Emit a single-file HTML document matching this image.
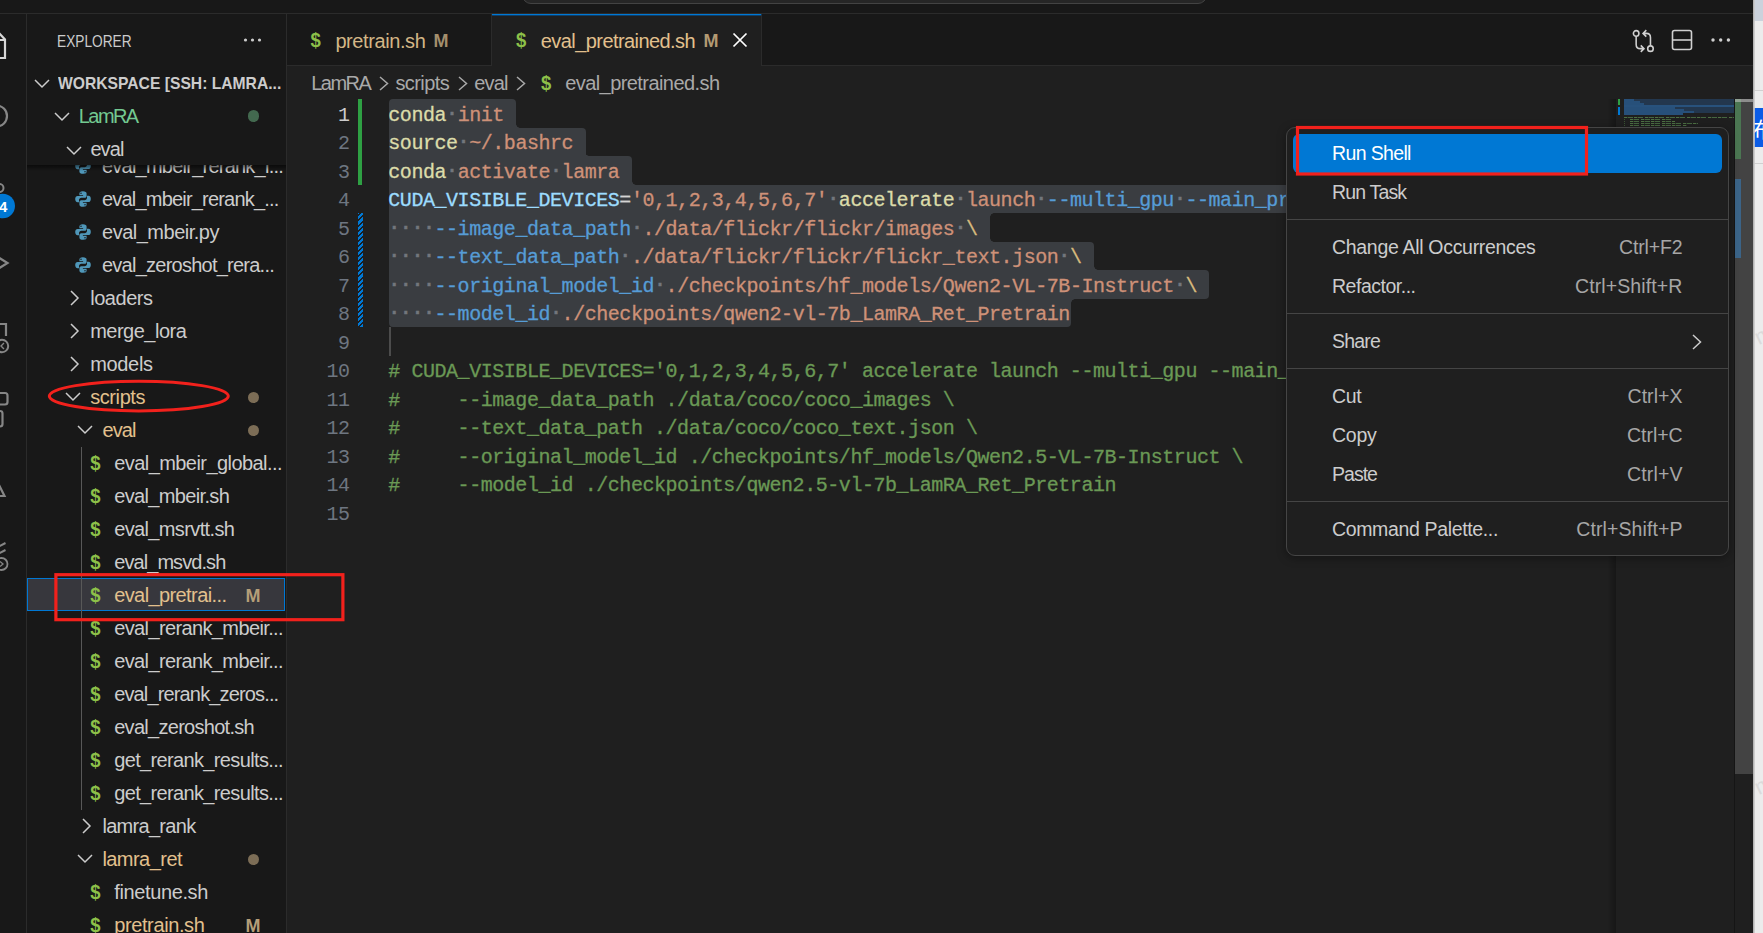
<!DOCTYPE html>
<html lang="en">
<head>
<meta charset="utf-8">
<title>eval_pretrained.sh - WORKSPACE [SSH: LamRA] - Visual Studio Code</title>
<style>
*{box-sizing:border-box;margin:0;padding:0}
html,body{width:1763px;height:933px;overflow:hidden;background:#181818}
body{position:relative;font-family:"Liberation Sans",sans-serif;color:#cccccc;font-size:19px}
.abs{position:absolute}
span{white-space:pre}
/* title bar */
#title{position:absolute;left:0;top:0;width:1753px;height:14px;background:#181818;border-bottom:1px solid #2b2b2b;overflow:hidden}
#cc{position:absolute;left:521.5px;top:-20px;width:685.5px;height:24px;border:1px solid #434343;border-radius:9px;background:#262626}
/* activity bar */
#act{position:absolute;left:0;top:14px;width:27px;height:919px;background:#181818;border-right:1px solid #2b2b2b;overflow:hidden}
/* sidebar */
#side{position:absolute;left:27px;top:14px;width:260px;height:919px;background:#181818;border-right:1px solid #2b2b2b;overflow:hidden}
/* editor group */
#tabs{position:absolute;left:287px;top:14px;width:1466px;height:52px;background:#181818;border-bottom:1px solid #2b2b2b}
.tab{position:absolute;top:0;height:52px;border-right:1px solid #2b2b2b}
#crumbs{position:absolute;left:287px;top:66px;width:1466px;height:33px;background:#1f1f1f;color:#a9a9a9}
#ed{position:absolute;left:287px;top:99px;width:1466px;height:834px;background:#1f1f1f;overflow:hidden}
/* right strip (other window) */
#strip{position:absolute;left:1753px;top:0;width:10px;height:933px;background:#ececec;overflow:hidden}
.sh{font-weight:700;color:#8dc149;font-size:18.5px;display:inline-block;transform:scaleY(1.07)}
.cv{fill:none;stroke:#a9a9a9;stroke-width:1.5}
.sel{position:absolute;left:102px;height:28.5px;background:#3a3d41}
.ln{position:absolute;left:0;margin-top:2.6px;width:62.5px;text-align:right;height:28.5px;line-height:28.5px;font-family:"Liberation Mono",monospace;font-size:20px;letter-spacing:-0.45px}
.cl{position:absolute;left:101.3px;margin-top:2.6px;height:28.5px;line-height:28.5px;white-space:pre;font-family:"Liberation Mono",monospace;font-size:20px;letter-spacing:-0.45px;color:#d4d4d4;-webkit-text-stroke:0.3px}
.mg{height:1px;background:repeating-linear-gradient(90deg,#4d7043 0 3px,rgba(68,99,59,.4) 3px 4px,#456640 4px 9px,transparent 9px 10.5px)}
.ws{color:#72767c;font-weight:700;position:relative;top:-1.8px}
#menu{position:absolute;left:1286px;top:127px;width:443px;height:429px;background:#1f1f1f;border:1px solid #454545;border-radius:9px;padding:6px 0;box-shadow:0 2px 10px rgba(0,0,0,.36)}
.mi{position:relative;height:39px;margin:0 6px;border-radius:6px;line-height:39px}
.mi.hl{background:#0078d4}
.ml{position:absolute;left:39px;top:0;color:#cccccc}
.mk{position:absolute;right:39.5px;top:0;color:#a6a6a6}
.msep{height:1px;background:#454545;margin:6.5px 0 8.5px}
</style>
</head>
<body>
<div id="title"><div id="cc"></div></div>
<div id="act"><!-- activity bar is cropped on the left: only the right edge of each icon shows (coords relative to y=14) -->
<svg class="abs" style="left:0;top:0" width="26" height="919" viewBox="0 14 26 919" fill="none">
  <!-- explorer (active) -->
  <path d="M-7 33.5 H-0.5 L5 39.5 V58 H-7" stroke="#d7d7d7" stroke-width="2.2"/>
  <path d="M-7 40 H5" stroke="#d7d7d7" stroke-width="2"/>
  <!-- search -->
  <circle cx="-3.5" cy="116" r="10.5" stroke="#868686" stroke-width="2.2"/>
  <!-- source control -->
  <circle cx="-0.5" cy="188" r="4" stroke="#868686" stroke-width="2"/>
  <circle cx="2.8" cy="206" r="12.2" fill="#0078d4"/>
  <!-- run -->
  <path d="M-8 253.5 L7.5 263 L-8 272.5" stroke="#868686" stroke-width="2.2"/>
  <!-- remote explorer -->
  <path d="M-6 324 H6 V336" stroke="#868686" stroke-width="2.2"/>
  <circle cx="2" cy="346" r="6.2" stroke="#868686" stroke-width="2" fill="#181818"/>
  <path d="M4 343 L1 346 L4 349" stroke="#868686" stroke-width="1.4"/>
  <!-- extensions -->
  <path d="M-6 393 H5 Q7.5 393 7.5 395.5 V402 Q7.5 404.5 5 404.5 H-6" stroke="#868686" stroke-width="2.2"/>
  <path d="M-6 411 H0 Q2.5 411 2.5 413.5 V424 Q2.5 426.5 0 426.5 H-6" stroke="#868686" stroke-width="2.2"/>
  <!-- testing -->
  <path d="M-4 479 L4.5 496 H-6" stroke="#868686" stroke-width="2.2"/>
  <!-- other -->
  <path d="M-6 549 L5.5 543 M-6 556 L5.5 550" stroke="#868686" stroke-width="2"/>
  <circle cx="1.5" cy="564" r="6" stroke="#868686" stroke-width="1.8" fill="#181818"/>
  <path d="M0 561.5 L3 564 L0 566.5" stroke="#868686" stroke-width="1.3"/>
</svg>
<span class="abs" style="left:-1px;top:181px;line-height:24px;font-size:15px;font-weight:700;color:#ffffff">4</span>
</div>
<div id="side"><div id="tree"><svg class="abs" style="left:48.3px;top:144px" width="16" height="16" viewBox="0 0 16 16" fill="#4f97b9"><path d="M7.9 0.3C5.2 0.3 4.4 1.3 4.4 2.6V4.3H8.1V5H2.6C1.2 5 0.2 6.1 0.2 8.1C0.2 10.1 1.1 11.3 2.5 11.3H4V9.2C4 7.8 5.1 6.8 6.4 6.8H9.7C10.8 6.8 11.6 6 11.6 4.9V2.6C11.6 1.2 10.4 0.3 7.9 0.3ZM6 1.5A0.75 0.75 0 1 1 6 3A0.75 0.75 0 1 1 6 1.5Z"/><path d="M8.1 15.7C10.8 15.7 11.6 14.7 11.6 13.4V11.7H7.9V11H13.4C14.8 11 15.8 9.9 15.8 7.9C15.8 5.9 14.9 4.7 13.5 4.7H12V6.8C12 8.2 10.9 9.2 9.6 9.2H6.3C5.2 9.2 4.4 10 4.4 11.1V13.4C4.4 14.8 5.6 15.7 8.1 15.7ZM10 14.5A0.75 0.75 0 1 1 10 13A0.75 0.75 0 1 1 10 14.5Z"/></svg><span class="abs" style="left:75.0px;top:136.4px;line-height:33px;color:#cccccc"><span style="font-size:20.0px;letter-spacing:-0.767px">eval_mbeir_rerank_l...</span></span>
<svg class="abs" style="left:48.3px;top:177px" width="16" height="16" viewBox="0 0 16 16" fill="#4f97b9"><path d="M7.9 0.3C5.2 0.3 4.4 1.3 4.4 2.6V4.3H8.1V5H2.6C1.2 5 0.2 6.1 0.2 8.1C0.2 10.1 1.1 11.3 2.5 11.3H4V9.2C4 7.8 5.1 6.8 6.4 6.8H9.7C10.8 6.8 11.6 6 11.6 4.9V2.6C11.6 1.2 10.4 0.3 7.9 0.3ZM6 1.5A0.75 0.75 0 1 1 6 3A0.75 0.75 0 1 1 6 1.5Z"/><path d="M8.1 15.7C10.8 15.7 11.6 14.7 11.6 13.4V11.7H7.9V11H13.4C14.8 11 15.8 9.9 15.8 7.9C15.8 5.9 14.9 4.7 13.5 4.7H12V6.8C12 8.2 10.9 9.2 9.6 9.2H6.3C5.2 9.2 4.4 10 4.4 11.1V13.4C4.4 14.8 5.6 15.7 8.1 15.7ZM10 14.5A0.75 0.75 0 1 1 10 13A0.75 0.75 0 1 1 10 14.5Z"/></svg><span class="abs" style="left:75.0px;top:169.4px;line-height:33px;color:#cccccc"><span style="font-size:20.0px;letter-spacing:-0.807px">eval_mbeir_rerank_...</span></span>
<svg class="abs" style="left:48.3px;top:210px" width="16" height="16" viewBox="0 0 16 16" fill="#4f97b9"><path d="M7.9 0.3C5.2 0.3 4.4 1.3 4.4 2.6V4.3H8.1V5H2.6C1.2 5 0.2 6.1 0.2 8.1C0.2 10.1 1.1 11.3 2.5 11.3H4V9.2C4 7.8 5.1 6.8 6.4 6.8H9.7C10.8 6.8 11.6 6 11.6 4.9V2.6C11.6 1.2 10.4 0.3 7.9 0.3ZM6 1.5A0.75 0.75 0 1 1 6 3A0.75 0.75 0 1 1 6 1.5Z"/><path d="M8.1 15.7C10.8 15.7 11.6 14.7 11.6 13.4V11.7H7.9V11H13.4C14.8 11 15.8 9.9 15.8 7.9C15.8 5.9 14.9 4.7 13.5 4.7H12V6.8C12 8.2 10.9 9.2 9.6 9.2H6.3C5.2 9.2 4.4 10 4.4 11.1V13.4C4.4 14.8 5.6 15.7 8.1 15.7ZM10 14.5A0.75 0.75 0 1 1 10 13A0.75 0.75 0 1 1 10 14.5Z"/></svg><span class="abs" style="left:75.0px;top:202.4px;line-height:33px;color:#cccccc"><span style="font-size:20.0px;letter-spacing:-0.493px">eval_mbeir.py</span></span>
<svg class="abs" style="left:48.3px;top:243px" width="16" height="16" viewBox="0 0 16 16" fill="#4f97b9"><path d="M7.9 0.3C5.2 0.3 4.4 1.3 4.4 2.6V4.3H8.1V5H2.6C1.2 5 0.2 6.1 0.2 8.1C0.2 10.1 1.1 11.3 2.5 11.3H4V9.2C4 7.8 5.1 6.8 6.4 6.8H9.7C10.8 6.8 11.6 6 11.6 4.9V2.6C11.6 1.2 10.4 0.3 7.9 0.3ZM6 1.5A0.75 0.75 0 1 1 6 3A0.75 0.75 0 1 1 6 1.5Z"/><path d="M8.1 15.7C10.8 15.7 11.6 14.7 11.6 13.4V11.7H7.9V11H13.4C14.8 11 15.8 9.9 15.8 7.9C15.8 5.9 14.9 4.7 13.5 4.7H12V6.8C12 8.2 10.9 9.2 9.6 9.2H6.3C5.2 9.2 4.4 10 4.4 11.1V13.4C4.4 14.8 5.6 15.7 8.1 15.7ZM10 14.5A0.75 0.75 0 1 1 10 13A0.75 0.75 0 1 1 10 14.5Z"/></svg><span class="abs" style="left:75.0px;top:235.4px;line-height:33px;color:#cccccc"><span style="font-size:20.0px;letter-spacing:-0.757px">eval_zeroshot_rera...</span></span>
<svg class="abs" style="left:43.3px;top:276px;fill:none;stroke:#cccccc;stroke-width:1.5" width="10" height="16" viewBox="0 0 10 16"><path d="M1 1 L8 8 L1 15"/></svg><span class="abs" style="left:63.2px;top:268.4px;line-height:33px;color:#cccccc"><span style="font-size:20.0px;letter-spacing:-0.458px">loaders</span></span>
<svg class="abs" style="left:43.3px;top:309px;fill:none;stroke:#cccccc;stroke-width:1.5" width="10" height="16" viewBox="0 0 10 16"><path d="M1 1 L8 8 L1 15"/></svg><span class="abs" style="left:63.2px;top:301.4px;line-height:33px;color:#cccccc"><span style="font-size:20.0px;letter-spacing:-0.507px">merge_lora</span></span>
<svg class="abs" style="left:43.3px;top:342px;fill:none;stroke:#cccccc;stroke-width:1.5" width="10" height="16" viewBox="0 0 10 16"><path d="M1 1 L8 8 L1 15"/></svg><span class="abs" style="left:63.2px;top:334.4px;line-height:33px;color:#cccccc"><span style="font-size:20.0px;letter-spacing:-0.331px">models</span></span>
<svg class="abs" style="left:38.3px;top:378.2px;fill:none;stroke:#cccccc;stroke-width:1.5" width="16" height="10" viewBox="0 0 16 10"><path d="M1 1 L8 8 L15 1"/></svg><span class="abs" style="left:63.2px;top:367.4px;line-height:33px;color:#e2c08d"><span style="font-size:20.0px;letter-spacing:-0.414px">scripts</span></span><div class="abs" style="left:220.5px;top:377.5px;width:11.5px;height:11.5px;border-radius:50%;background:#7c6d56"></div>
<svg class="abs" style="left:50.3px;top:411.2px;fill:none;stroke:#cccccc;stroke-width:1.5" width="16" height="10" viewBox="0 0 16 10"><path d="M1 1 L8 8 L15 1"/></svg><span class="abs" style="left:75.6px;top:400.4px;line-height:33px;color:#e2c08d"><span style="font-size:20.0px;letter-spacing:-0.951px">eval</span></span><div class="abs" style="left:220.5px;top:410.5px;width:11.5px;height:11.5px;border-radius:50%;background:#7c6d56"></div>
<div class="abs" style="left:0;top:563.6px;width:258px;height:33.4px;background:#37373d;border:1px solid #0078d4"></div>
<div class="abs" style="left:54px;top:432.5px;width:1px;height:363px;background:#585858"></div>
<span class="abs sh" style="left:63.3px;top:433px;line-height:33px">$</span><span class="abs" style="left:87.2px;top:433.4px;line-height:33px;color:#cccccc"><span style="font-size:20.0px;letter-spacing:-0.560px">eval_mbeir_global...</span></span>
<span class="abs sh" style="left:63.3px;top:466px;line-height:33px">$</span><span class="abs" style="left:87.2px;top:466.4px;line-height:33px;color:#cccccc"><span style="font-size:20.0px;letter-spacing:-0.647px">eval_mbeir.sh</span></span>
<span class="abs sh" style="left:63.3px;top:499px;line-height:33px">$</span><span class="abs" style="left:87.2px;top:499.4px;line-height:33px;color:#cccccc"><span style="font-size:20.0px;letter-spacing:-0.631px">eval_msrvtt.sh</span></span>
<span class="abs sh" style="left:63.3px;top:532px;line-height:33px">$</span><span class="abs" style="left:87.2px;top:532.4px;line-height:33px;color:#cccccc"><span style="font-size:20.0px;letter-spacing:-0.923px">eval_msvd.sh</span></span>
<span class="abs sh" style="left:63.3px;top:565px;line-height:33px">$</span><span class="abs" style="left:87.2px;top:565.4px;line-height:33px;color:#e2c08d"><span style="font-size:20.0px;letter-spacing:-0.598px">eval_pretrai...</span></span>
<span class="abs sh" style="left:63.3px;top:598px;line-height:33px">$</span><span class="abs" style="left:87.2px;top:598.4px;line-height:33px;color:#cccccc"><span style="font-size:20.0px;letter-spacing:-0.620px">eval_rerank_mbeir...</span></span>
<span class="abs sh" style="left:63.3px;top:631px;line-height:33px">$</span><span class="abs" style="left:87.2px;top:631.4px;line-height:33px;color:#cccccc"><span style="font-size:20.0px;letter-spacing:-0.620px">eval_rerank_mbeir...</span></span>
<span class="abs sh" style="left:63.3px;top:664px;line-height:33px">$</span><span class="abs" style="left:87.2px;top:664.4px;line-height:33px;color:#cccccc"><span style="font-size:20.0px;letter-spacing:-0.855px">eval_rerank_zeros...</span></span>
<span class="abs sh" style="left:63.3px;top:697px;line-height:33px">$</span><span class="abs" style="left:87.2px;top:697.4px;line-height:33px;color:#cccccc"><span style="font-size:20.0px;letter-spacing:-0.713px">eval_zeroshot.sh</span></span>
<span class="abs sh" style="left:63.3px;top:730px;line-height:33px">$</span><span class="abs" style="left:87.2px;top:730.4px;line-height:33px;color:#cccccc"><span style="font-size:20.0px;letter-spacing:-0.644px">get_rerank_results...</span></span>
<span class="abs sh" style="left:63.3px;top:763px;line-height:33px">$</span><span class="abs" style="left:87.2px;top:763.4px;line-height:33px;color:#cccccc"><span style="font-size:20.0px;letter-spacing:-0.644px">get_rerank_results...</span></span>
<span class="abs" style="left:218.6px;top:564.5px;line-height:33px;color:#b59e78;font-weight:700"><span style="font-size:18.0px;letter-spacing:0.400px;font-weight:700">M</span></span>
<svg class="abs" style="left:55px;top:804px;fill:none;stroke:#cccccc;stroke-width:1.5" width="10" height="16" viewBox="0 0 10 16"><path d="M1 1 L8 8 L1 15"/></svg><span class="abs" style="left:75.4px;top:796.4px;line-height:33px;color:#cccccc"><span style="font-size:20.0px;letter-spacing:-0.695px">lamra_rank</span></span>
<svg class="abs" style="left:50.3px;top:840.2px;fill:none;stroke:#cccccc;stroke-width:1.5" width="16" height="10" viewBox="0 0 16 10"><path d="M1 1 L8 8 L15 1"/></svg><span class="abs" style="left:75.4px;top:829.4px;line-height:33px;color:#e2c08d"><span style="font-size:20.0px;letter-spacing:-0.543px">lamra_ret</span></span><div class="abs" style="left:220.5px;top:839.5px;width:11.5px;height:11.5px;border-radius:50%;background:#7c6d56"></div>
<span class="abs sh" style="left:63.3px;top:862px;line-height:33px">$</span><span class="abs" style="left:87.2px;top:862.4px;line-height:33px;color:#cccccc"><span style="font-size:20.0px;letter-spacing:-0.369px">finetune.sh</span></span>
<span class="abs sh" style="left:63.3px;top:895px;line-height:33px">$</span><span class="abs" style="left:87.2px;top:895.4px;line-height:33px;color:#e2c08d"><span style="font-size:20.0px;letter-spacing:-0.382px">pretrain.sh</span></span><span class="abs" style="left:218.6px;top:894.5px;line-height:33px;color:#b59e78;font-weight:700"><span style="font-size:18.0px;letter-spacing:0.400px;font-weight:700">M</span></span></div>
<div class="abs" style="left:0;top:0;width:259px;height:151px;background:#181818"></div>
<div class="abs" style="left:0;top:151px;width:259px;height:6px;background:linear-gradient(180deg,rgba(0,0,0,.55),rgba(0,0,0,0))"></div>
<span class="abs" style="left:30.4px;top:13.200000000000003px;line-height:28px;color:#cccccc"><span style="font-size:16.5px;display:inline-block;transform:scaleX(0.8300);transform-origin:0 50%">EXPLORER</span></span>
<svg class="abs" style="left:216px;top:23px" width="20" height="6" viewBox="0 0 20 6" fill="#cccccc"><circle cx="2.5" cy="3" r="1.6"/><circle cx="9.5" cy="3" r="1.6"/><circle cx="16.5" cy="3" r="1.6"/></svg>
<svg class="abs" style="left:6.5px;top:65.0px;fill:none;stroke:#cccccc;stroke-width:1.5" width="16" height="10" viewBox="0 0 16 10"><path d="M1 1 L8 8 L15 1"/></svg>
<span class="abs" style="left:30.5px;top:55px;line-height:28px;color:#cccccc;font-weight:700"><span style="font-size:16.2px;display:inline-block;transform:scaleX(0.9674);transform-origin:0 50%;font-weight:700">WORKSPACE [SSH: LAMRA...</span></span>
<svg class="abs" style="left:27px;top:98.0px;fill:none;stroke:#cccccc;stroke-width:1.5" width="16" height="10" viewBox="0 0 16 10"><path d="M1 1 L8 8 L15 1"/></svg><span class="abs" style="left:51.8px;top:85.9px;line-height:33px;color:#73c991"><span style="font-size:20.0px;letter-spacing:-1.581px">LamRA</span></span><div class="abs" style="left:220.5px;top:96.0px;width:11.5px;height:11.5px;border-radius:50%;background:#43694f"></div>
<svg class="abs" style="left:38.7px;top:131.5px;fill:none;stroke:#cccccc;stroke-width:1.5" width="16" height="10" viewBox="0 0 16 10"><path d="M1 1 L8 8 L15 1"/></svg><span class="abs" style="left:63.400000000000006px;top:118.9px;line-height:33px;color:#cccccc"><span style="font-size:20.0px;letter-spacing:-0.901px">eval</span></span></div>
<div id="tabs"><div class="tab" style="left:0;width:205px;height:51px;background:#181818">
  <span class="abs sh" style="left:23.6px;top:1.4px;line-height:51px">$</span>
  <span class="abs" style="left:48.4px;top:1px;line-height:52px;color:#d3b686"><span style="font-size:20.0px;letter-spacing:-0.409px">pretrain.sh</span></span>
  <span class="abs" style="left:146.4px;top:1px;line-height:52px;color:#a48f6d"><span style="font-size:18.0px;letter-spacing:0.300px;font-weight:700">M</span></span>
</div>
<div class="tab" style="left:205px;width:270px;height:53px;background:#1f1f1f;border-top:2px solid #0d3e68">
  <div class="abs" style="left:0;top:-2px;width:269px;height:1px;background:#0078d4"></div>
  <span class="abs sh" style="left:24.1px;top:-1px;line-height:51px">$</span>
  <span class="abs" style="left:48.8px;top:-1px;line-height:52px;color:#e2c08d"><span style="font-size:20.0px;letter-spacing:-0.570px">eval_pretrained.sh</span></span>
  <span class="abs" style="left:211.6px;top:-1px;line-height:52px;color:#b39a73"><span style="font-size:18.0px;letter-spacing:0.000px;font-weight:700">M</span></span>
  <svg class="abs" style="left:240px;top:16px" width="16" height="16" viewBox="0 0 16 16"><path d="M1.5 1.5 L14.5 14.5 M14.5 1.5 L1.5 14.5" stroke="#ffffff" stroke-width="1.7" fill="none"/></svg>
</div>
<!-- editor actions -->
<svg class="abs" style="left:1344.5px;top:14.5px" width="24" height="24.5" viewBox="0 0 26 26" fill="none" stroke="#d0d0d0" stroke-width="1.7">
  <circle cx="4.5" cy="4.5" r="3"/><circle cx="20" cy="21" r="3"/>
  <path d="M4.5 7.5 V16.5 Q4.5 21 9 21 H12.5 M9.5 17.5 L13 21 L9.5 24.5"/>
  <path d="M20 18 V9 Q20 4.5 15.5 4.5 H12.5 M15.5 1 L12 4.5 L15.5 8"/>
</svg>
<svg class="abs" style="left:1384px;top:15px" width="22" height="22" viewBox="0 0 22 22" fill="none" stroke="#d0d0d0" stroke-width="1.6">
  <rect x="1.5" y="1.5" width="19" height="19" rx="2"/><path d="M1.5 11 H20.5"/>
</svg>
<svg class="abs" style="left:1423px;top:23px" width="22" height="6" viewBox="0 0 22 6" fill="#d0d0d0"><circle cx="3" cy="3" r="1.7"/><circle cx="10.7" cy="3" r="1.7"/><circle cx="18.4" cy="3" r="1.7"/></svg>
</div>
<div id="crumbs"><span class="abs" style="left:24.2px;top:0;line-height:34px"><span style="font-size:20.0px;letter-spacing:-1.521px">LamRA</span></span>
<svg class="abs cv" style="left:91px;top:10px" width="12" height="15" viewBox="0 0 12 15"><path d="M2 1 L9.5 7.5 L2 14"/></svg>
<span class="abs" style="left:108.4px;top:0;line-height:34px"><span style="font-size:20.0px;letter-spacing:-0.571px">scripts</span></span>
<svg class="abs cv" style="left:169.5px;top:10px" width="12" height="15" viewBox="0 0 12 15"><path d="M2 1 L9.5 7.5 L2 14"/></svg>
<span class="abs" style="left:187.3px;top:0;line-height:34px"><span style="font-size:20.0px;letter-spacing:-0.876px">eval</span></span>
<svg class="abs cv" style="left:227.5px;top:10px" width="12" height="15" viewBox="0 0 12 15"><path d="M2 1 L9.5 7.5 L2 14"/></svg>
<span class="abs sh" style="left:254px;top:0.8px;line-height:33px">$</span>
<span class="abs" style="left:278.2px;top:0;line-height:34px"><span style="font-size:20.0px;letter-spacing:-0.570px">eval_pretrained.sh</span></span>
</div>
<div id="ed"><div class="sel" style="top:0.0px;width:127.4px;border-radius:4px 4px 0px 0px"></div>
<div class="sel" style="top:28.5px;width:196.7px;border-radius:0px 4px 0px 0px"></div>
<div class="sel" style="top:57.0px;width:242.9px;border-radius:0px 4px 0px 0px"></div>
<div class="sel" style="top:85.5px;width:1374.8px;border-radius:0px 4px 4px 0px"></div>
<div class="sel" style="top:114.0px;width:600.9px;border-radius:0px 0px 0px 0px"></div>
<div class="sel" style="top:142.5px;width:704.9px;border-radius:0px 4px 0px 0px"></div>
<div class="sel" style="top:171.0px;width:820.4px;border-radius:0px 4px 4px 0px"></div>
<div class="sel" style="top:199.5px;width:681.8px;border-radius:0px 0px 4px 4px"></div>
<div class="abs" style="left:229.1px;top:24.5px;width:4px;height:4px;background:radial-gradient(circle at 100% 0,transparent 3.5px,#3a3d41 4px)"></div>
<div class="abs" style="left:298.4px;top:53.0px;width:4px;height:4px;background:radial-gradient(circle at 100% 0,transparent 3.5px,#3a3d41 4px)"></div>
<div class="abs" style="left:344.6px;top:81.5px;width:4px;height:4px;background:radial-gradient(circle at 100% 0,transparent 3.5px,#3a3d41 4px)"></div>
<div class="abs" style="left:702.6px;top:114.0px;width:4px;height:4px;background:radial-gradient(circle at 100% 100%,transparent 3.5px,#3a3d41 4px)"></div>
<div class="abs" style="left:702.6px;top:138.5px;width:4px;height:4px;background:radial-gradient(circle at 100% 0,transparent 3.5px,#3a3d41 4px)"></div>
<div class="abs" style="left:806.6px;top:167.0px;width:4px;height:4px;background:radial-gradient(circle at 100% 0,transparent 3.5px,#3a3d41 4px)"></div>
<div class="abs" style="left:783.5px;top:199.5px;width:4px;height:4px;background:radial-gradient(circle at 100% 100%,transparent 3.5px,#3a3d41 4px)"></div>
<div class="abs" style="left:71px;top:0;width:4px;height:85.5px;background:#2ea043"></div>
<div class="abs" style="left:71px;top:114px;width:5px;height:114px;background:repeating-linear-gradient(-45deg,#0078d4 0 2.2px,#1f1f1f 2.2px 3.6px)"></div>
<div class="abs" style="left:102px;top:228px;width:2px;height:29px;background:#4c4c4c"></div>
<div class="ln" style="top:0.0px;color:#cccccc">1</div>
<div class="cl" style="top:0.0px"><span style="color:#dcdcaa">conda</span><span class="ws">·</span><span style="color:#ce9178">init</span></div>
<div class="ln" style="top:28.5px;color:#6e7681">2</div>
<div class="cl" style="top:28.5px"><span style="color:#dcdcaa">source</span><span class="ws">·</span><span style="color:#ce9178">~/.bashrc</span></div>
<div class="ln" style="top:57.0px;color:#6e7681">3</div>
<div class="cl" style="top:57.0px"><span style="color:#dcdcaa">conda</span><span class="ws">·</span><span style="color:#ce9178">activate</span><span class="ws">·</span><span style="color:#ce9178">lamra</span></div>
<div class="ln" style="top:85.5px;color:#6e7681">4</div>
<div class="cl" style="top:85.5px"><span style="color:#9cdcfe">CUDA_VISIBLE_DEVICES</span><span style="color:#d4d4d4">=</span><span style="color:#ce9178">&#x27;0,1,2,3,4,5,6,7&#x27;</span><span class="ws">·</span><span style="color:#dcdcaa">accelerate</span><span class="ws">·</span><span style="color:#ce9178">launch</span><span class="ws">·</span><span style="color:#569cd6">--multi_gpu</span><span class="ws">·</span><span style="color:#569cd6">--main_process_port</span><span class="ws">·</span><span style="color:#ce9178">29508</span><span class="ws">·</span><span style="color:#ce9178">eval/eval_zeroshot.py</span><span class="ws">·</span><span style="color:#d7ba7d">\</span></div>
<div class="ln" style="top:114.0px;color:#6e7681">5</div>
<div class="cl" style="top:114.0px"><span class="ws">····</span><span style="color:#569cd6">--image_data_path</span><span class="ws">·</span><span style="color:#ce9178">./data/flickr/flickr/images</span><span class="ws">·</span><span style="color:#d7ba7d">\</span></div>
<div class="ln" style="top:142.5px;color:#6e7681">6</div>
<div class="cl" style="top:142.5px"><span class="ws">····</span><span style="color:#569cd6">--text_data_path</span><span class="ws">·</span><span style="color:#ce9178">./data/flickr/flickr/flickr_text.json</span><span class="ws">·</span><span style="color:#d7ba7d">\</span></div>
<div class="ln" style="top:171.0px;color:#6e7681">7</div>
<div class="cl" style="top:171.0px"><span class="ws">····</span><span style="color:#569cd6">--original_model_id</span><span class="ws">·</span><span style="color:#ce9178">./checkpoints/hf_models/Qwen2-VL-7B-Instruct</span><span class="ws">·</span><span style="color:#d7ba7d">\</span></div>
<div class="ln" style="top:199.5px;color:#6e7681">8</div>
<div class="cl" style="top:199.5px"><span class="ws">····</span><span style="color:#569cd6">--model_id</span><span class="ws">·</span><span style="color:#ce9178">./checkpoints/qwen2-vl-7b_LamRA_Ret_Pretrain</span></div>
<div class="ln" style="top:228.0px;color:#6e7681">9</div>
<div class="ln" style="top:256.5px;color:#6e7681">10</div>
<div class="cl" style="top:256.5px"><span style="color:#6a9955"># CUDA_VISIBLE_DEVICES=&#x27;0,1,2,3,4,5,6,7&#x27; accelerate launch --multi_gpu --main_process_port 29508 eval/eval_zeroshot.py \</span></div>
<div class="ln" style="top:285.0px;color:#6e7681">11</div>
<div class="cl" style="top:285.0px"><span style="color:#6a9955">#     --image_data_path ./data/coco/coco_images \</span></div>
<div class="ln" style="top:313.5px;color:#6e7681">12</div>
<div class="cl" style="top:313.5px"><span style="color:#6a9955">#     --text_data_path ./data/coco/coco_text.json \</span></div>
<div class="ln" style="top:342.0px;color:#6e7681">13</div>
<div class="cl" style="top:342.0px"><span style="color:#6a9955">#     --original_model_id ./checkpoints/hf_models/Qwen2.5-VL-7B-Instruct \</span></div>
<div class="ln" style="top:370.5px;color:#6e7681">14</div>
<div class="cl" style="top:370.5px"><span style="color:#6a9955">#     --model_id ./checkpoints/qwen2.5-vl-7b_LamRA_Ret_Pretrain</span></div>
<div class="ln" style="top:399.0px;color:#6e7681">15</div>
<div class="abs" style="left:1320px;top:0;width:9px;height:834px;background:linear-gradient(90deg,rgba(0,0,0,0),rgba(0,0,0,.28))"></div>
<div id="mm" class="abs" style="left:1329px;top:0;width:119px;height:834px;background:#1f1f1f">
<div class="abs" style="left:1.5px;top:0;width:2.5px;height:6px;background:#2ea043"></div>
<div class="abs" style="left:1.5px;top:8px;width:2.5px;height:8px;background:#0078d4"></div>
<div class="abs" style="left:8px;top:0;width:110px;height:14px;background:#23374e"></div>
<div class="abs" style="left:8px;top:14px;width:33px;height:2px;background:#27507a"></div>
<div class="abs" style="left:8px;top:0;width:10px;height:2px;background:#27507a"></div>
<div class="abs" style="left:8px;top:2px;width:16px;height:2px;background:#27507a"></div>
<div class="abs" style="left:8px;top:4px;width:20px;height:2px;background:#27507a"></div>
<div class="abs" style="left:8px;top:6px;width:110px;height:2px;background:#28527d"></div>
<div class="abs" style="left:8px;top:8px;width:51px;height:2px;background:#27507a"></div>
<div class="abs" style="left:8px;top:10px;width:60px;height:2px;background:#27507a"></div>
<div class="abs" style="left:8px;top:12px;width:70px;height:2px;background:#27507a"></div>
<div class="abs" style="left:8px;top:14px;width:59px;height:2px;background:#27507a"></div>
<div class="abs mg" style="left:8px;top:18px;width:110px"></div>
<div class="abs" style="left:8px;top:20px;width:1px;height:8px;background:repeating-linear-gradient(180deg,#3a5533 0 1px,transparent 1px 2px)"></div>
<div class="abs mg" style="left:14px;top:20px;width:42px"></div>
<div class="abs mg" style="left:14px;top:22px;width:45px"></div>
<div class="abs mg" style="left:14px;top:24px;width:68px"></div>
<div class="abs mg" style="left:14px;top:26px;width:57px"></div>
</div>
<div id="sb" class="abs" style="left:1447px;top:0;width:19px;height:834px;background:#1f1f1f;border-left:1px solid #151515">
<div class="abs" style="left:0;top:0;width:18px;height:675px;background:#434343"></div>
<div class="abs" style="left:0;top:0;width:6px;height:60px;background:#4b7652"></div>
<div class="abs" style="left:0;top:0;width:18px;height:3px;background:rgba(190,190,190,.6)"></div>
<div class="abs" style="left:0;top:80px;width:6px;height:79px;background:#3b6488"></div>
</div></div>
<div id="menu">
  <div class="mi hl"><span class="ml" style="color:#fff"><span style="font-size:19.5px;letter-spacing:-0.640px">Run Shell</span></span></div>
  <div class="mi"><span class="ml"><span style="font-size:19.5px;letter-spacing:-0.842px">Run Task</span></span></div>
  <div class="msep"></div>
  <div class="mi"><span class="ml"><span style="font-size:19.5px;letter-spacing:-0.308px">Change All Occurrences</span></span><span class="mk"><span style="font-size:19.5px;letter-spacing:-0.141px">Ctrl+F2</span></span></div>
  <div class="mi"><span class="ml"><span style="font-size:19.5px;letter-spacing:-0.489px">Refactor...</span></span><span class="mk"><span style="font-size:19.5px;letter-spacing:0.108px">Ctrl+Shift+R</span></span></div>
  <div class="msep"></div>
  <div class="mi"><span class="ml"><span style="font-size:19.5px;letter-spacing:-0.809px">Share</span></span><svg class="abs" style="left:398px;top:12px;fill:none;stroke:#cccccc;stroke-width:1.5" width="12" height="16" viewBox="0 0 12 16"><path d="M2 1 L9.5 8 L2 15"/></svg></div>
  <div class="msep"></div>
  <div class="mi"><span class="ml"><span style="font-size:19.5px;letter-spacing:-0.286px">Cut</span></span><span class="mk"><span style="font-size:19.5px;letter-spacing:0.044px">Ctrl+X</span></span></div>
  <div class="mi"><span class="ml"><span style="font-size:19.5px;letter-spacing:-0.258px">Copy</span></span><span class="mk"><span style="font-size:19.5px;letter-spacing:-0.066px">Ctrl+C</span></span></div>
  <div class="mi"><span class="ml"><span style="font-size:19.5px;letter-spacing:-0.975px">Paste</span></span><span class="mk"><span style="font-size:19.5px;letter-spacing:0.111px">Ctrl+V</span></span></div>
  <div class="msep"></div>
  <div class="mi"><span class="ml"><span style="font-size:19.5px;letter-spacing:-0.352px">Command Palette...</span></span><span class="mk"><span style="font-size:19.5px;letter-spacing:0.088px">Ctrl+Shift+P</span></span></div>
</div>

<div id="strip"><div class="abs" style="left:0;top:0;width:10px;height:21px;background:#cbd2dc"></div>
<div class="abs" style="left:0;top:90px;width:10px;height:1px;background:#d0d0d0"></div>
<div class="abs" style="left:0;top:163px;width:10px;height:1px;background:#d0d0d0"></div>
<div class="abs" style="left:0;top:108px;width:10px;height:39px;background:#0b5ce6;overflow:hidden"><span class="abs" style="left:-1px;top:8.5px;line-height:26px;font-size:21px;color:#ffffff;font-family:'Liberation Sans','Noto Sans CJK SC',sans-serif">布</span></div>
<span class="abs" style="left:2px;top:322px;font-size:22px;line-height:26px;color:#dadada;transform:rotate(-25deg)">m</span>
<span class="abs" style="left:2px;top:772px;font-size:22px;line-height:26px;color:#dadada;transform:rotate(-25deg)">m</span>
<div class="abs" style="left:0;top:0;width:1px;height:933px;background:#b4b4b4"></div>
<div class="abs" style="left:1px;top:0;width:1px;height:933px;background:rgba(200,200,200,.85)"></div>
</div>
<!-- red annotation marks drawn on top of the screenshot -->
<svg class="abs" style="left:0;top:0;pointer-events:none" width="1763" height="933" viewBox="0 0 1763 933" fill="none" stroke="#f2211c">
  <ellipse cx="138.8" cy="396.1" rx="89.5" ry="14.8" stroke-width="3"/>
  <rect x="55.9" y="574.7" width="287" height="45" stroke-width="3.2"/>
  <rect x="1297.5" y="127.5" width="289" height="46.5" stroke-width="3.2"/>
</svg>

</body>
</html>
